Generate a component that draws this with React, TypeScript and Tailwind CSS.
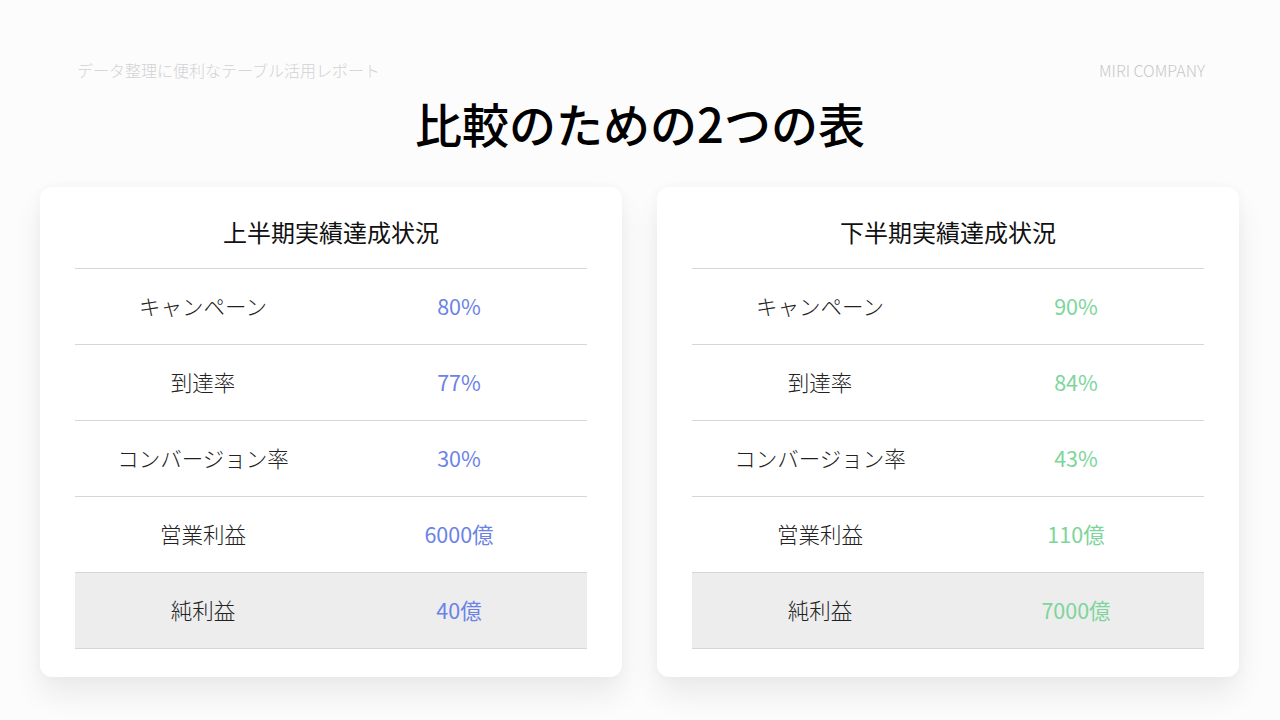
import React from "react";

type Row = { label: string; value: string; shaded?: boolean };

const left: Row[] = [
  { label: "キャンペーン", value: "80%" },
  { label: "到達率", value: "77%" },
  { label: "コンバージョン率", value: "30%" },
  { label: "営業利益", value: "6000億" },
  { label: "純利益", value: "40億", shaded: true },
];

const right: Row[] = [
  { label: "キャンペーン", value: "90%" },
  { label: "到達率", value: "84%" },
  { label: "コンバージョン率", value: "43%" },
  { label: "営業利益", value: "110億" },
  { label: "純利益", value: "7000億", shaded: true },
];

function Card({ title, rows, tone }: { title: string; rows: Row[]; tone: "blue" | "green" }) {
  return (
    <div className="w-[582px] rounded-[12px] bg-white px-[35px] pb-[28px] shadow-[0_18px_30px_rgba(0,0,0,0.07),0_0_12px_rgba(0,0,0,0.03)]">
      <div className="flex h-[81px] items-start justify-center pt-[30px]">
        <span className="text-[24px] leading-[30px] text-[#111]">{title}</span>
      </div>
      <div className="border-b border-[#d6d6d6]">
        {rows.map((r, i) => (
          <div
            key={i}
            className={
              "grid h-[76px] grid-cols-2 items-center border-t border-[#d6d6d6] " +
              (r.shaded ? "bg-[#ededee]" : "")
            }
          >
            <div className="text-center text-[21.5px] font-light text-[#222]">{r.label}</div>
            <div
              className={
                "text-center text-[21.5px] " +
                (tone === "blue" ? "text-[#6c83e6]" : "text-[#7dd59a]")
              }
            >
              {r.value}
            </div>
          </div>
        ))}
      </div>
    </div>
  );
}

export default function App() {
  return (
    <div
      className="h-[720px] w-[1280px] overflow-hidden bg-[#fcfcfd]"
      style={{ fontFamily: '"Noto Sans CJK JP", "Noto Sans", sans-serif' }}
    >
      <div className="flex items-center justify-between pl-[77px] pr-[75px] pt-[59px]">
        <span className="text-[16px] font-light leading-[22px] text-[#d2d2d2]">
          データ整理に便利なテーブル活用レポート
        </span>
        <span className="text-[16px] font-light leading-[22px] text-[#c8c8c8]">MIRI COMPANY</span>
      </div>
      <h1 className="mt-[10px] text-center text-[47px] font-medium leading-[64px] text-black">
        比較のための2つの表
      </h1>
      <div className="mt-[32px] flex gap-[35px] px-[40px]">
        <Card title="上半期実績達成状況" rows={left} tone="blue" />
        <Card title="下半期実績達成状況" rows={right} tone="green" />
      </div>
    </div>
  );
}
